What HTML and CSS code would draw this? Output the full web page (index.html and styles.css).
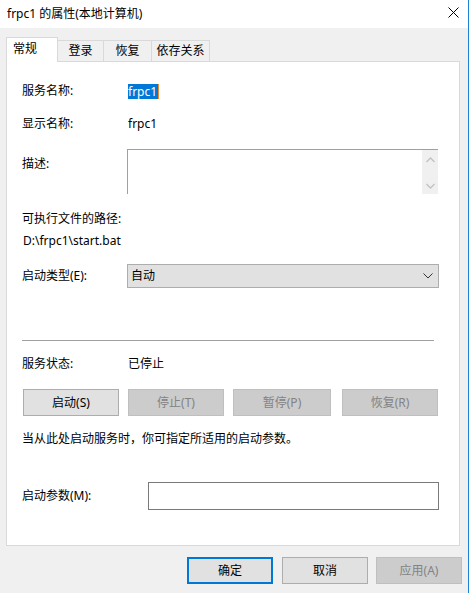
FILE: index.html
```html
<!DOCTYPE html>
<html lang="zh-CN">
<head>
<meta charset="utf-8">
<title>frpc1 的属性(本地计算机)</title>
<link rel="stylesheet" href="styles.css">
</head>
<body>
<div class="window">
  <div class="titlebar">
    <span class="title">frpc1 的属性(本地计算机)</span>
    <svg class="close" width="11" height="11" viewBox="0 0 11 11"><path d="M0.5 0.5 L10.5 10.5 M10.5 0.5 L0.5 10.5" stroke="#000" stroke-width="1" fill="none"/></svg>
  </div>
  <div class="client">
    <div class="tabs">
      <div class="tab active">常规</div>
      <div class="tab t2">登录</div>
      <div class="tab t3">恢复</div>
      <div class="tab t4">依存关系</div>
    </div>
    <div class="panel">
      <div class="row r1">
        <span class="label">服务名称:</span>
        <span class="sel">frpc1</span>
      </div>
      <div class="row r2">
        <span class="label">显示名称:</span>
        <span class="value">frpc1</span>
      </div>
      <div class="row r3">
        <span class="label top">描述:</span>
        <div class="desc">
          <div class="scroll">
            <svg width="9" height="6" viewBox="0 0 9 6"><path d="M0.5 5 L4.5 1 L8.5 5" stroke="#c2c2c2" stroke-width="1.3" fill="none"/></svg>
            <svg width="9" height="6" viewBox="0 0 9 6"><path d="M0.5 1 L4.5 5 L8.5 1" stroke="#c2c2c2" stroke-width="1.3" fill="none"/></svg>
          </div>
        </div>
      </div>
      <div class="line r4">可执行文件的路径:</div>
      <div class="line r5">D:\frpc1\start.bat</div>
      <div class="row r6">
        <span class="label">启动类型(E):</span>
        <div class="combo">
          <span>自动</span>
          <svg width="10" height="6" viewBox="0 0 10 6"><path d="M0.5 0.5 L5 5 L9.5 0.5" stroke="#333" stroke-width="1" fill="none"/></svg>
        </div>
      </div>
      <div class="sep"></div>
      <div class="row r7">
        <span class="label">服务状态:</span>
        <span class="value">已停止</span>
      </div>
      <div class="btnrow">
        <div class="btn b1">启动(S)</div>
        <div class="btn b2 disabled">停止(T)</div>
        <div class="btn b3 disabled">暂停(P)</div>
        <div class="btn b4 disabled">恢复(R)</div>
      </div>
      <div class="line r8">当从此处启动服务时，你可指定所适用的启动参数。</div>
      <div class="row r9">
        <span class="label wide">启动参数(M):</span>
        <div class="input"></div>
      </div>
    </div>
    <div class="footer">
      <div class="btn fb ok">确定</div>
      <div class="btn fb cancel">取消</div>
      <div class="btn fb apply disabled">应用(A)</div>
    </div>
  </div>
</div>
</body>
</html>
```
FILE: styles.css
```css
* { box-sizing: border-box; }
html, body {
  margin: 0;
  padding: 0;
  background: #ffffff;
}
body {
  font-family: "Noto Sans", "Noto Sans CJK SC", sans-serif;
  font-size: 12px;
  color: #000;
  line-height: 16px;
}
.window {
  width: 469px;
  height: 593px;
  border-right: 1px solid #1883d7;
  display: flex;
  flex-direction: column;
  overflow: hidden;
}
.titlebar {
  height: 28px;
  background: #fff;
  display: flex;
  align-items: center;
  padding-left: 7px;
  padding-bottom: 1px;
}
.title { flex: 1; }
.close { margin-right: 9px; margin-top: -3px; }
.client {
  flex: 1;
  background: #f0f0f0;
  padding: 9px 0 0 6px;
}
.tabs {
  display: flex;
  align-items: flex-end;
  height: 25px;
  margin-bottom: -1px;
  position: relative;
  z-index: 1;
}
.tab {
  height: 21px;
  margin-bottom: 1px;
  background: #f0f0f0;
  border-top: 1px solid #d9d9d9;
  border-right: 1px solid #d9d9d9;
  padding: 2px 0 0 0;
  text-align: center;
}
.tab.active {
  height: 25px;
  margin-bottom: 0;
  background: #fff;
  border-left: 1px solid #d9d9d9;
  width: 52px;
  text-align: left;
  padding: 3px 0 0 6px;
}
.tab.t2 { width: 46px; }
.tab.t3 { width: 48px; }
.tab.t4 { width: 58px; }
.panel {
  width: 454px;
  height: 485px;
  background: #fff;
  border: 1px solid #d9d9d9;
  padding: 20px 0 0 15px;
}
.row {
  display: flex;
  align-items: center;
}
.label {
  width: 106px;
  flex: none;
}
.label.wide { width: 126px; }
.label.top { align-self: flex-start; margin-top: 7px; width: 105px; }
.sel {
  background: #0078d7;
  color: #fff;
  height: 15px;
  line-height: 15px;
  margin-top: 2px;
  padding: 0 1px 0 0;
  border-right: 1px solid #e8892f;
}
.r2 { margin-top: 17px; }
.r3 { margin-top: 17px; }
.desc {
  width: 311px;
  height: 45px;
  border-top: 1px solid #a0a0a0;
  border-left: 1px solid #a0a0a0;
  display: flex;
  justify-content: flex-end;
}
.scroll {
  width: 16px;
  height: 44px;
  background: #f0f0f0;
  display: flex;
  flex-direction: column;
  align-items: center;
  justify-content: space-between;
  padding: 7px 0 5px 1px;
}
.scroll svg { display: block; }
.line { padding-left: 0; }
.r4 { margin-top: 17px; }
.r5 { margin-top: 6px; padding-left: 1px; }
.r6 { margin-top: 15px; }
.combo {
  width: 312px;
  height: 24px;
  background: #e1e1e1;
  border: 1px solid #adadad;
  display: flex;
  align-items: center;
  justify-content: space-between;
  padding: 0 5px 0 3px;
  margin-left: -1px;
}
.sep {
  margin-top: 52px;
  width: 412px;
  height: 1px;
  background: #a0a0a0;
}
.r7 { margin-top: 15px; }
.btnrow {
  display: flex;
  margin-top: 17px;
  padding-left: 1px;
}
.btn {
  height: 27px;
  background: #e1e1e1;
  border: 1px solid #adadad;
  display: flex;
  align-items: center;
  justify-content: center;
  flex: none;
}
.btn.disabled {
  background: #cccccc;
  border-color: #bfbfbf;
  color: #838383;
}
.b1 { width: 96px; }
.b2 { width: 96px; margin-left: 9px; }
.b3 { width: 98px; margin-left: 9px; }
.b4 { width: 96px; margin-left: 11px; }
.r8 { margin-top: 15px; }
.r9 { margin-top: 35px; }
.input {
  width: 291px;
  height: 28px;
  border: 1px solid #7a7a7a;
  background: #fff;
}
.footer {
  display: flex;
  margin-top: 11px;
  padding-left: 181px;
}
.fb { width: 86px; }
.ok {
  border: 2px solid #0078d7;
}
.cancel { margin-left: 9px; }
.apply { margin-left: 8px; }
```
